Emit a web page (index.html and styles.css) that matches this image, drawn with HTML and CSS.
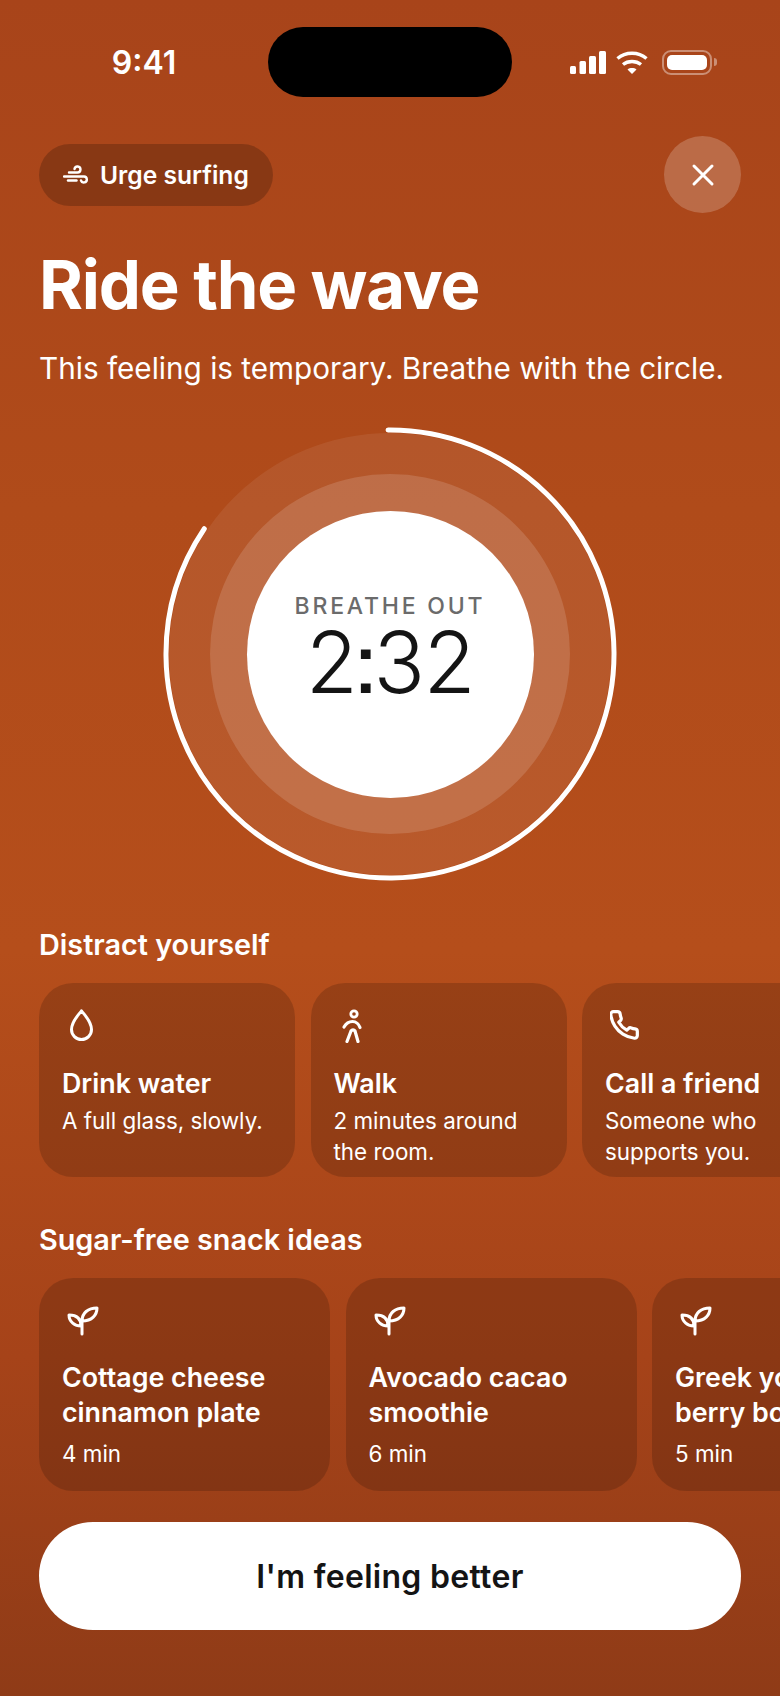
FILE: index.html
```html
<!DOCTYPE html>
<html lang="en">

<head>
    <meta charset="UTF-8">
    <meta name="viewport" content="width=device-width, initial-scale=1.0">
    <link rel="stylesheet" href="styles.css">
    <title>Ride the wave</title>
</head>

<body>
    <div class="status-bar">
        <div class="status-time">9:41</div>
        <div class="island"></div>
        <div class="status-icons">
            <svg class="signal" width="36" height="23" viewBox="0 0 36 23" fill="#fff">
                <rect x="0" y="15" width="6" height="8" rx="1.5"/>
                <rect x="9.5" y="10" width="6.5" height="13" rx="1.5"/>
                <rect x="19" y="5" width="7" height="18" rx="1.5"/>
                <rect x="29" y="0" width="7" height="23" rx="1.5"/>
            </svg>
            <svg class="wifi" width="32" height="23" viewBox="0 0 32 23" fill="none" stroke="#fff" stroke-width="3.4">
                <path d="M1.5 7.5C9.5 .5 22.5 .5 30.5 7.5"/>
                <path d="M7 13.5C12 9.5 20 9.5 25 13.5"/>
                <path d="M16 23l-4.5-4.6c2.5-1.8 6.5-1.8 9 0z" fill="#fff" stroke="none"/>
            </svg>
            <div class="battery">
                <div class="battery-fill"></div>
            </div>
            <div class="battery-nub"></div>
        </div>
    </div>

    <div class="top-row">
        <div class="pill">
            <svg width="26" height="20" viewBox="0 0 26 20" fill="none" stroke="#fff" stroke-width="2.4" stroke-linecap="round">
                <path d="M6 7.5H14.5a3 3 0 1 0-3-3.5"/>
                <path d="M1 11.5H21a3 3 0 1 1-3 4"/>
                <path d="M5 15.5H13.5"/>
            </svg>
            <span>Urge surfing</span>
        </div>
        <div class="close-btn">
            <svg width="24" height="24" viewBox="0 0 24 24" fill="none" stroke="#fff" stroke-width="3" stroke-linecap="round">
                <path d="M3 3L21 21M21 3L3 21"/>
            </svg>
        </div>
    </div>

    <h1>Ride the wave</h1>
    <p class="subtitle">This feeling is temporary. Breathe with the circle.</p>

    <div class="breath">
        <svg class="breath-arc" width="454" height="454" viewBox="0 0 454 454" fill="none">
            <circle cx="227" cy="227" r="224" stroke="#fff" stroke-width="5" stroke-linecap="round" stroke-dasharray="1190 1408" transform="rotate(-90.5 227 227)"/>
        </svg>
        <div class="ring-outer">
            <div class="ring-inner">
                <div class="timer">
                    <div class="timer-label">BREATHE OUT</div>
                    <div class="timer-value">2<span class="timer-colon">:</span>32</div>
                </div>
            </div>
        </div>
    </div>

    <h2>Distract yourself</h2>
    <div class="scroller">
        <div class="card card-small">
            <svg class="icon" width="32" height="34" viewBox="-2.5 0 32 34" fill="none" stroke="#fff" stroke-width="3" stroke-linejoin="round">
                <path d="M12 1.8C8.5 6.5 2 12.5 2 20.5a10 10 0 0 0 20 0C22 12.5 15.5 6.5 12 1.8z"/>
            </svg>
            <div class="card-title">Drink water</div>
            <div class="card-text">A full glass, slowly.</div>
        </div>
        <div class="card card-small">
            <svg class="icon" width="32" height="34" viewBox="0 0 32 34" fill="none" stroke="#fff" stroke-width="3.2" stroke-linecap="round" stroke-linejoin="round">
                <circle cx="15" cy="5" r="3.2" stroke-width="2.8"/>
                <path d="M5 18C7 14.5 10 12.5 13.5 12.5C17 12.5 20 15.5 21 18.5"/>
                <path d="M8 32.5L12 22C13 20.5 15 20.5 16 22L19 32.5"/>
            </svg>
            <div class="card-title">Walk</div>
            <div class="card-text">2 minutes around the room.</div>
        </div>
        <div class="card card-small">
            <svg class="icon" width="32" height="34" viewBox="1.500 0 24 25.500" fill="none" stroke="#fff" stroke-width="2.400" stroke-linejoin="round">
                <path d="M22 16.92v3a2 2 0 0 1-2.18 2 19.79 19.79 0 0 1-8.63-3.07 19.5 19.5 0 0 1-6-6 19.79 19.79 0 0 1-3.07-8.67A2 2 0 0 1 4.11 2h3a2 2 0 0 1 2 1.72 12.84 12.84 0 0 0 .7 2.81 2 2 0 0 1-.45 2.11L8.09 9.91a16 16 0 0 0 6 6l1.27-1.27a2 2 0 0 1 2.11-.45 12.84 12.84 0 0 0 2.81.7A2 2 0 0 1 22 16.92z"/>
            </svg>
            <div class="card-title">Call a friend</div>
            <div class="card-text">Someone who supports you.</div>
        </div>
    </div>

    <h2 class="second">Sugar-free snack ideas</h2>
    <div class="scroller">
        <div class="card card-large">
            <svg class="icon" width="32" height="30" viewBox="0 0 32 30" fill="none" stroke="#fff" stroke-width="3" stroke-linecap="round" stroke-linejoin="round">
                <path d="M14 20C8 20 2 16 2 9C9 9 14 12 14 20z"/>
                <path d="M15 15C15 7 21 2 30 2C30 9 25 15 15 15z"/>
                <path d="M15 28V13"/>
            </svg>
            <div class="card-title">Cottage cheese cinnamon plate</div>
            <div class="card-text">4 min</div>
        </div>
        <div class="card card-large">
            <svg class="icon" width="32" height="30" viewBox="0 0 32 30" fill="none" stroke="#fff" stroke-width="3" stroke-linecap="round" stroke-linejoin="round">
                <path d="M14 20C8 20 2 16 2 9C9 9 14 12 14 20z"/>
                <path d="M15 15C15 7 21 2 30 2C30 9 25 15 15 15z"/>
                <path d="M15 28V13"/>
            </svg>
            <div class="card-title">Avocado cacao smoothie</div>
            <div class="card-text">6 min</div>
        </div>
        <div class="card card-large">
            <svg class="icon" width="32" height="30" viewBox="0 0 32 30" fill="none" stroke="#fff" stroke-width="3" stroke-linecap="round" stroke-linejoin="round">
                <path d="M14 20C8 20 2 16 2 9C9 9 14 12 14 20z"/>
                <path d="M15 15C15 7 21 2 30 2C30 9 25 15 15 15z"/>
                <path d="M15 28V13"/>
            </svg>
            <div class="card-title">Greek yogurt<br>berry bowl</div>
            <div class="card-text">5 min</div>
        </div>
    </div>

    <button class="better-btn">I'm feeling better</button>
</body>

</html>
```

FILE: styles.css
```css
html,
body {
    margin: 0;
    padding: 0;
}

body {
    width: 780px;
    height: 1696px;
    overflow: hidden;
    font-family: 'Inter', 'Liberation Sans', sans-serif;
    color: #fff;
    background: linear-gradient(180deg, #a8441a 0%, #b04b1a 30%, #b54e1b 56%, #a64319 80%, #8f3b17 100%);
}

.status-bar {
    display: grid;
    grid-template-columns: 268px 244px 268px;
    height: 70px;
    padding-top: 27px;
    align-items: center;
}

.status-time {
    padding-left: 20px;
    text-align: center;
    font-size: 32px;
    font-weight: 600;
}

.island {
    height: 70px;
    border-radius: 35px;
    background-color: #000;
}

.status-icons {
    display: flex;
    align-items: center;
    padding-left: 58px;
}

.signal {
    margin-right: 10px;
}

.wifi {
    margin-right: 14px;
}

.battery {
    display: flex;
    box-sizing: border-box;
    width: 50px;
    height: 25px;
    padding: 3px;
    border: 2px solid rgba(255, 255, 255, 0.4);
    border-radius: 9px;
}

.battery-fill {
    flex: 1;
    border-radius: 5px;
    background-color: #fff;
}

.battery-nub {
    width: 3px;
    height: 8px;
    margin-left: 2px;
    border-radius: 0 3px 3px 0;
    background-color: rgba(255, 255, 255, 0.4);
}

.top-row {
    display: flex;
    justify-content: space-between;
    align-items: center;
    margin: 39px 39px 0;
}

.pill {
    display: flex;
    align-items: center;
    gap: 11px;
    height: 62px;
    padding: 0 24px;
    border-radius: 31px;
    font-size: 24.6px;
    font-weight: 600;
    background-color: rgba(0, 0, 0, 0.2);
}

.close-btn {
    display: flex;
    justify-content: center;
    align-items: center;
    width: 77px;
    height: 77px;
    border-radius: 50%;
    background-color: rgba(255, 255, 255, 0.2);
}

h1 {
    margin: 33px 0 0 39px;
    font-size: 67px;
    line-height: 78px;
    font-weight: 650;
    letter-spacing: -1.2px;
}

.subtitle {
    margin: 25px 0 0 39px;
    font-size: 29.7px;
    line-height: 38px;
    font-weight: 400;
}

.breath {
    position: relative;
    display: flex;
    justify-content: center;
    align-items: center;
    height: 454px;
    margin-top: 40px;
}

.breath-arc {
    position: absolute;
    left: 163px;
    top: 0;
}

.ring-outer {
    display: flex;
    justify-content: center;
    align-items: center;
    width: 442px;
    height: 442px;
    border-radius: 50%;
    background-color: rgba(255, 255, 255, 0.07);
}

.ring-inner {
    display: flex;
    justify-content: center;
    align-items: center;
    width: 360px;
    height: 360px;
    border-radius: 50%;
    background-color: rgba(255, 255, 255, 0.14);
}

.timer {
    display: flex;
    flex-direction: column;
    justify-content: center;
    align-items: center;
    box-sizing: border-box;
    width: 287px;
    height: 287px;
    padding-bottom: 12px;
    border-radius: 50%;
    background-color: #fff;
}

.timer-label {
    font-size: 23px;
    line-height: 26px;
    font-weight: 500;
    letter-spacing: 2.8px;
    color: #6b6b6b;
}

.timer-value {
    margin-top: 4px;
    font-size: 85px;
    line-height: 80px;
    font-weight: 300;
    letter-spacing: -1.5px;
    font-feature-settings: 'ss07';
    color: #141414;
}

.timer-colon {
    margin: 0 -3px;
    font-weight: 400;
}

h2 {
    margin: 46px 0 0 39px;
    font-size: 28.8px;
    line-height: 36px;
    font-weight: 600;
}

h2.second {
    margin-top: 45px;
}

.scroller {
    display: flex;
    gap: 15.5px;
    margin-top: 20px;
    padding-left: 39px;
    overflow: hidden;
}

.card {
    flex-shrink: 0;
    box-sizing: border-box;
    padding: 26px 20px 0 23px;
    border-radius: 34px;
    background-color: rgba(0, 0, 0, 0.16);
}

.card-small {
    width: 256px;
    height: 194px;
}

.card-large {
    width: 291px;
    height: 213px;
    padding-top: 28px;
}

.icon {
    display: block;
    margin-left: 5px;
}

.card-title {
    font-size: 26.8px;
    line-height: 35px;
    font-weight: 600;
}

.card-text {
    font-size: 22.4px;
    line-height: 31px;
    font-weight: 400;
}

.card-small .card-title {
    margin-top: 23px;
}

.card-small .card-text {
    margin-top: 4px;
}

.card-large .card-title {
    margin-top: 24px;
}

.card-large .card-text {
    margin-top: 8px;
}

.better-btn {
    display: block;
    width: 702px;
    height: 108px;
    margin: 31px 0 0 39px;
    border: none;
    border-radius: 54px;
    font-family: inherit;
    font-size: 32px;
    font-weight: 600;
    letter-spacing: 0.3px;
    color: #141414;
    background-color: #fff;
}
```
